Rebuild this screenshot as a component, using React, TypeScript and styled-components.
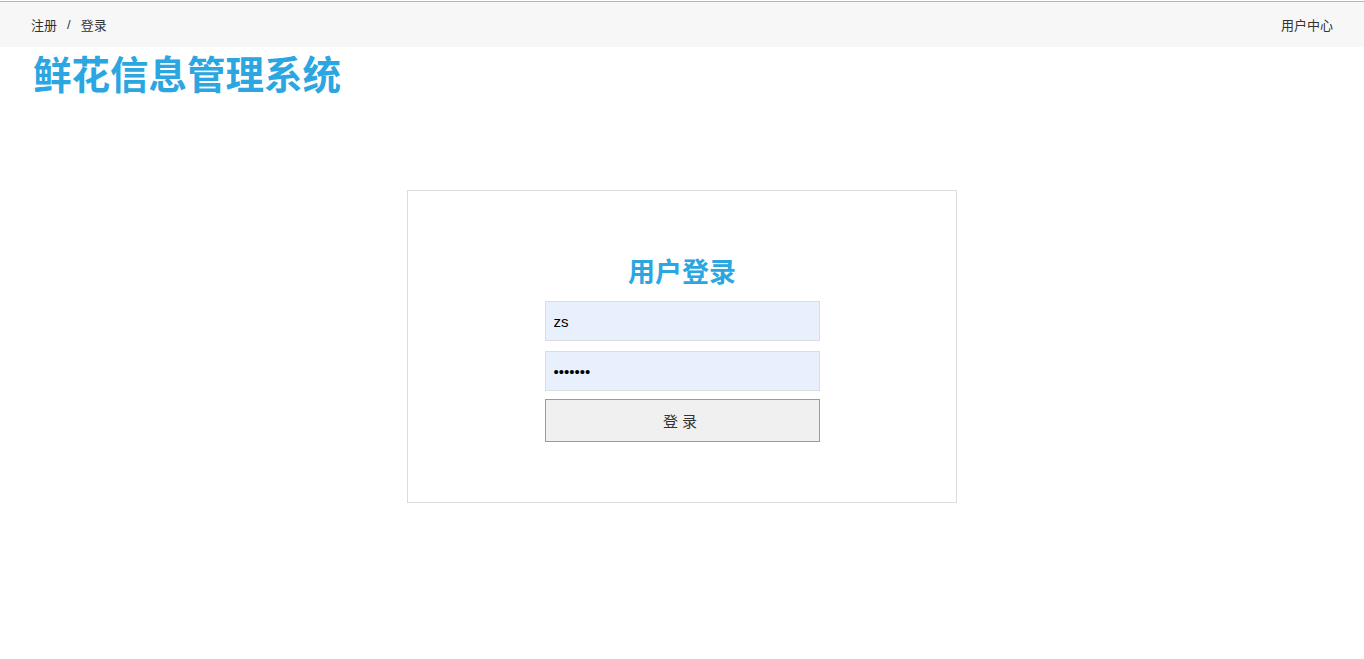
import React from "react";
import styled, { createGlobalStyle } from "styled-components";

const GlobalStyle = createGlobalStyle`
    body {
        margin: 0;
        background: #fff;
        font-family: "Liberation Sans", "Noto Sans CJK SC", sans-serif;
        color: #333;
    }
`;

const TopBar = styled.div`
    display: flex;
    align-items: center;
    justify-content: space-between;
    height: 44px;
    margin-top: 1px;
    border-top: 1px solid #b4b4b4;
    background: #f7f7f7;
    padding: 0 31px 1px;
    font-size: 13px;
`;

const Crumbs = styled.div`
    display: flex;
    align-items: center;
    gap: 10px;
`;

const Link = styled.a`
    color: #333;
    text-decoration: none;
    cursor: pointer;
`;

const Title = styled.h1`
    margin: 0;
    padding-left: 33px;
    font-size: 38.5px;
    line-height: 58px;
    font-weight: 700;
    color: #2ba6e1;
`;

const Card = styled.div`
    width: 548px;
    margin: 85px auto 0;
    border: 1px solid #dcdcdc;
    padding: 62px 0 60px;
    display: flex;
    flex-direction: column;
    align-items: center;
`;

const Heading = styled.h2`
    margin: 0 0 8px;
    font-size: 27px;
    line-height: 40px;
    font-weight: 700;
    color: #2ba6e1;
`;

const Form = styled.form`
    display: flex;
    flex-direction: column;
    width: 275px;
    gap: 10px;
`;

const Input = styled.input`
    box-sizing: border-box;
    height: 40px;
    width: 100%;
    border: 1px solid #dadce0;
    background: #e8f0fe;
    padding: 0 8px;
    font-size: 15px;
    font-family: "Liberation Sans", sans-serif;
    color: #000;
    outline: none;
`;

const Button = styled.button`
    box-sizing: border-box;
    height: 43px;
    width: 100%;
    margin-top: -2px;
    border: 1px solid #9a9a9a;
    background: #f0f0f0;
    font-size: 15px;
    letter-spacing: 4px;
    color: #333;
    font-family: "Noto Sans CJK SC", sans-serif;
    cursor: pointer;
`;

const App: React.FC = () => {
    return (
        <>
            <GlobalStyle />
            <TopBar>
                <Crumbs>
                    <Link>注册</Link>
                    <span>/</span>
                    <Link>登录</Link>
                </Crumbs>
                <Link>用户中心</Link>
            </TopBar>
            <Title>鲜花信息管理系统</Title>
            <Card>
                <Heading>用户登录</Heading>
                <Form onSubmit={(e) => e.preventDefault()}>
                    <Input type="text" defaultValue="zs" />
                    <Input type="password" defaultValue="1234567" />
                    <Button type="submit">登录</Button>
                </Form>
            </Card>
        </>
    );
};

export default App;
